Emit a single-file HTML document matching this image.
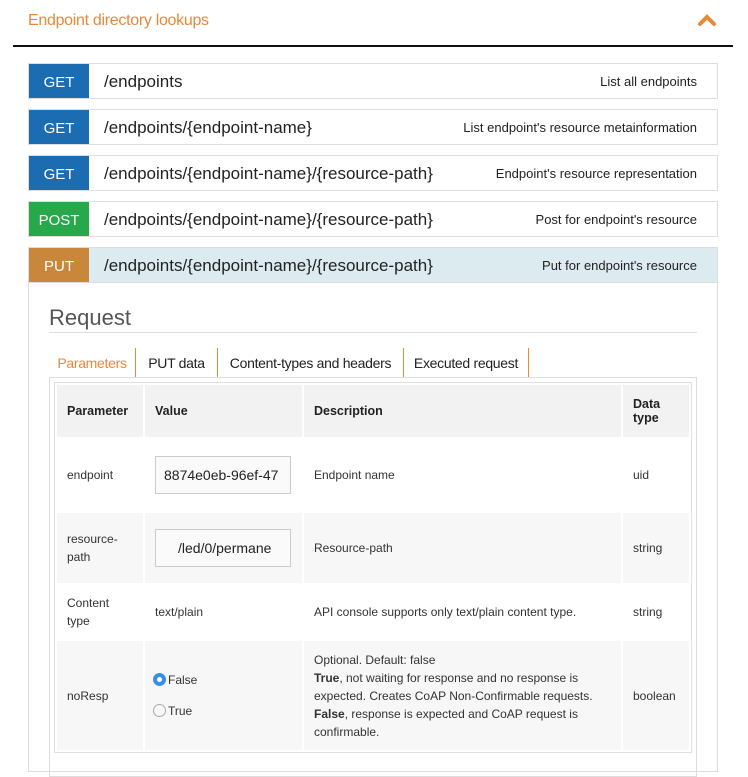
<!DOCTYPE html>
<html><head><meta charset="utf-8"><style>
*{box-sizing:border-box;margin:0;padding:0}
body{width:748px;height:762px;overflow:hidden;background:#fff;font-family:"Liberation Sans",sans-serif;color:#333;position:relative}
.a{position:absolute}
.hdr{left:28px;top:12px;font-size:16px;color:#e8883a;letter-spacing:-0.3px}
.line{left:13px;top:45px;width:720px;height:2px;background:#111}
.row{position:absolute;left:28px;width:690px;height:36px;border:1px solid #ddd;background:#fff}
.badge{position:absolute;left:0;top:0;width:60px;height:34px;color:#fff;font-size:15px;line-height:34px;padding-top:2px;text-align:center}
.path{position:absolute;left:75px;top:1px;line-height:34px;font-size:17px;color:#222}
.desc{position:absolute;right:20px;top:1px;line-height:34px;font-size:13px;color:#222}
.get{background:#1b6cb1}.post{background:#27a84b}.put{background:#c8873a}
.panel{left:28px;top:282px;width:690px;height:490px;border:1px solid #ddd;border-top:none}
.req{left:49px;top:305px;font-size:22px;color:#555}
.rl{left:49px;top:332px;width:648px;height:1px;background:#ddd}
.tab{position:absolute;top:348px;height:30px;line-height:30px;font-size:14px;color:#222;border-right:1px solid #e8883a;text-align:center;white-space:nowrap;letter-spacing:-0.3px}
.box{left:49px;top:377px;width:648px;height:400px;border:1px solid #ddd}
table{position:absolute;left:54px;top:382px;width:638px;border:1px solid #e0e0e0;border-spacing:2px;font-size:12px;color:#333}
td,th{padding:0 10px;vertical-align:middle;text-align:left}
th{background:#f2f2f2;font-weight:bold;height:52px;font-size:12.5px;color:#222}
.w td{background:#fff}.g td{background:#f7f7f7}
.inp{width:136px;height:38px;border:1px solid #ccc;background:#fafafa;font-size:14px;line-height:36px;padding-left:8px;color:#222;white-space:nowrap;overflow:hidden}
.rad{display:inline-block;width:13px;height:13px;border-radius:50%;border:1px solid #aaa;vertical-align:-2px;margin-right:2px}
.on{border:4px solid #3b8ee8;background:#fff}
</style></head><body>
<div class="a hdr">Endpoint directory lookups</div>
<svg class="a" style="left:697px;top:13px" width="20" height="14" viewBox="0 0 20 14"><path d="M3 11 L10 4 L17 11" stroke="#e8883a" stroke-width="4" fill="none" stroke-linecap="round"/></svg>
<div class="a line"></div>

<div class="row" style="top:63px"><div class="badge get">GET</div><div class="path">/endpoints</div><div class="desc">List all endpoints</div></div>
<div class="row" style="top:109px"><div class="badge get">GET</div><div class="path">/endpoints/{endpoint-name}</div><div class="desc">List endpoint's resource metainformation</div></div>
<div class="row" style="top:155px"><div class="badge get">GET</div><div class="path">/endpoints/{endpoint-name}/{resource-path}</div><div class="desc">Endpoint's resource representation</div></div>
<div class="row" style="top:201px"><div class="badge post">POST</div><div class="path">/endpoints/{endpoint-name}/{resource-path}</div><div class="desc">Post for endpoint's resource</div></div>
<div class="row" style="top:247px;background:#dcebf0"><div class="badge put">PUT</div><div class="path">/endpoints/{endpoint-name}/{resource-path}</div><div class="desc">Put for endpoint's resource</div></div>

<div class="a panel"></div>
<div class="a req">Request</div>
<div class="a rl"></div>
<div class="tab" style="left:49px;width:87px;color:#e8883a">Parameters</div>
<div class="tab" style="left:136px;width:82px">PUT data</div>
<div class="tab" style="left:218px;width:186px">Content-types and headers</div>
<div class="tab" style="left:404px;width:125px">Executed request</div>
<div class="a box"></div>
<table>
<tr><th style="width:86px">Parameter</th><th style="width:157px">Value</th><th>Description</th><th style="width:66px">Data<br>type</th></tr>
<tr class="w" style="height:72px"><td>endpoint</td><td><div class="inp">8874e0eb-96ef-47</div></td><td>Endpoint name</td><td>uid</td></tr>
<tr class="g" style="height:70px"><td style="line-height:18px">resource-<br>path</td><td><div class="inp" style="padding-left:22px">/led/0/permane</div></td><td>Resource-path</td><td>string</td></tr>
<tr class="w" style="height:54px"><td style="line-height:18px">Content<br>type</td><td>text/plain</td><td>API console supports only text/plain content type.</td><td>string</td></tr>
<tr class="g" style="height:109px"><td>noResp</td><td style="padding-left:8px;line-height:31px"><span class="rad on"></span>False<br><span class="rad"></span>True</td><td style="line-height:18px">Optional. Default: false<br><b>True</b>, not waiting for response and no response is expected. Creates CoAP Non-Confirmable requests.<br><b>False</b>, response is expected and CoAP request is confirmable.</td><td>boolean</td></tr>
</table>
</body></html>
